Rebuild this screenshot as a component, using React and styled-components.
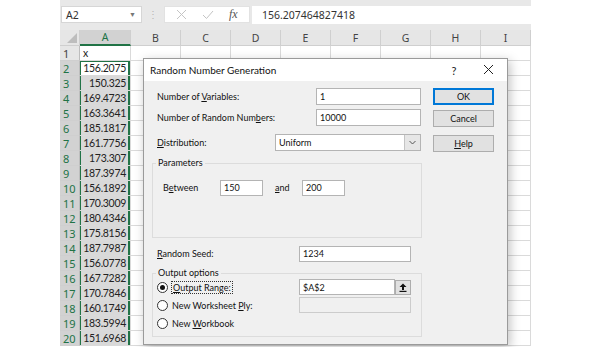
import React from 'react';
import styled, { createGlobalStyle } from 'styled-components';

const GlobalStyle = createGlobalStyle`
  html, body {
    margin: 0;
    padding: 0;
    background: #ffffff;
  }
  body {
    font-family: 'Noto Sans', 'Liberation Sans', sans-serif;
  }
`;

const COLS = ['A', 'B', 'C', 'D', 'E', 'F', 'G', 'H', 'I'];
const VALUES = [
  '156.2075', '150.325', '169.4723', '163.3641', '185.1817', '161.7756',
  '173.307', '187.3974', '156.1892', '170.3009', '180.4346', '175.8156',
  '187.7987', '156.0778', '167.7282', '170.7846', '160.1749', '183.5994',
  '151.6968',
];

const GREEN = '#217346';

const Frame = styled.div`
  position: relative;
  width: 471px;
  height: 347px;
  margin-left: 60px;
  overflow: hidden;
  background: #fff;
`;

const FormulaBar = styled.div`
  height: 30px;
  background: #e8e8e8;
  display: flex;
  align-items: flex-start;
  padding: 6px 0 0 1px;
  box-sizing: border-box;
`;

const NameBox = styled.div`
  width: 81px;
  height: 17px;
  background: #fff;
  border: 1px solid #d6d6d6;
  box-sizing: border-box;
  display: flex;
  align-items: center;
  justify-content: space-between;
  padding: 0 5px 0 4px;
  font-size: 10.5px;
  color: #333;
`;

const Caret = styled.span`
  font-size: 7px;
  color: #777;
`;

const Dots = styled.span`
  width: 22px;
  text-align: center;
  color: #b5b5b5;
  font-size: 10px;
  line-height: 17px;
`;

const FxIcons = styled.div`
  width: 86px;
  height: 17px;
  display: flex;
  align-items: center;
  justify-content: space-around;
  padding: 0 4px;
  box-sizing: border-box;
  background: #fff;
  border: 1px solid #e2e2e2;
  margin-right: 2px;
`;

const Fx = styled.span`
  font-family: 'Liberation Serif', serif;
  font-style: italic;
  font-size: 12px;
  color: #555;
`;

const FormulaInput = styled.div`
  flex: 1;
  height: 18px;
  background: #fff;
  display: flex;
  align-items: center;
  padding-left: 10px;
  font-size: 10.5px;
  color: #333;
`;

const Grid = styled.div`
  display: grid;
  grid-template-columns: 20px 51px repeat(8, 50px);
  grid-auto-rows: 15px;
  grid-template-rows: 16px;
`;

const ColHead = styled.div`
  background: ${(p) => (p.$active ? '#d2d2d2' : '#e6e6e6')};
  color: ${(p) => (p.$active ? GREEN : '#444')};
  border-right: 1px solid #cfcfcf;
  border-bottom: ${(p) => (p.$active ? `2px solid ${GREEN}` : '1px solid #cfcfcf')};
  box-sizing: border-box;
  font-size: 10.5px;
  display: flex;
  align-items: center;
  justify-content: center;
`;

const Corner = styled.div`
  background: #e6e6e6;
  border-right: 1px solid #cfcfcf;
  border-bottom: 1px solid #cfcfcf;
  box-sizing: border-box;
  position: relative;
  &::after {
    content: '';
    position: absolute;
    right: 2px;
    bottom: 2px;
    border-left: 10px solid transparent;
    border-bottom: 10px solid #bdbdbd;
  }
`;

const RowHead = styled.div`
  background: ${(p) => (p.$active ? '#d2d2d2' : '#e6e6e6')};
  color: ${(p) => (p.$active ? GREEN : '#444')};
  border-right: 1px solid #bdbdbd;
  border-bottom: 1px solid #cfcfcf;
  box-sizing: border-box;
  font-size: 11px;
  display: flex;
  align-items: center;
  padding-left: 3px;
`;

const Cell = styled.div`
  background: ${(p) => (p.$sel && !p.$current ? '#d9d9d9' : '#fff')};
  border-right: 1px solid #dadada;
  border-bottom: 1px solid #dadada;
  box-sizing: border-box;
  font-family: 'Lato', 'Liberation Sans', sans-serif;
  font-size: 10.5px;
  letter-spacing: -0.3px;
  color: #222;
  display: flex;
  align-items: center;
  justify-content: ${(p) => (p.$num ? 'flex-end' : 'flex-start')};
  padding: 0 4px 0 3px;
  box-shadow: ${(p) =>
    p.$sel
      ? `inset 1px 0 ${GREEN}, inset -2px 0 ${GREEN}${p.$current ? `, inset 0 1px ${GREEN}` : ''}`
      : 'none'};
`;

/* dialog */

const Dialog = styled.div`
  position: absolute;
  left: 83px;
  top: 58px;
  width: 365px;
  height: 287px;
  background: #f0f0f0;
  border: 1px solid #9a9a9a;
  box-sizing: border-box;
  box-shadow: 2px 3px 10px rgba(0, 0, 0, 0.25);
  font-family: 'Lato', 'Noto Sans', sans-serif;
  font-size: 9px;
  color: #111;
  display: flex;
  flex-direction: column;
`;

const TitleBar = styled.div`
  height: 22px;
  background: #fff;
  display: flex;
  align-items: center;
  padding: 0 8px 0 6px;
  font-size: 10px;
`;

const Title = styled.span`
  flex: 1;
`;

const TitleIcon = styled.span`
  width: 22px;
  text-align: center;
  margin-left: 12px;
  font-size: 11px;
  color: #222;
`;

const Body = styled.div`
  display: flex;
  padding: 7px 0 0 8px;
  gap: 11px;
`;

const Form = styled.div`
  width: 270px;
  display: flex;
  flex-direction: column;
`;

const Row = styled.div`
  display: flex;
  align-items: center;
  height: ${(p) => p.$h || 17}px;
  margin-top: ${(p) => p.$mt || 0}px;
  padding-left: ${(p) => p.$pl ?? 5}px;
`;

const Label = styled.span`
  width: ${(p) => p.$w || 'auto'};
  padding-left: ${(p) => p.$pl || 0}px;
  box-sizing: border-box;
  flex-shrink: 0;
`;

const Input = styled.div`
  width: ${(p) => p.$w}px;
  height: ${(p) => p.$h || 17}px;
  margin-left: ${(p) => (p.$auto ? 'auto' : '0')};
  margin-right: ${(p) => p.$mr || 0}px;
  background: ${(p) => (p.$disabled ? '#f0f0f0' : '#fff')};
  border: 1px solid ${(p) => (p.$disabled ? '#cccccc' : '#b4b4b4')};
  box-sizing: border-box;
  display: flex;
  align-items: center;
  padding-left: 3px;
  font-size: 9px;
`;

const Select = styled(Input)`
  padding-right: 0;
  justify-content: space-between;
`;

const SelectArrow = styled.div`
  width: 15px;
  height: 15px;
  background: #e6e6e6;
  border-left: 1px solid #c4c4c4;
  display: flex;
  align-items: center;
  justify-content: center;
`;

const Group = styled.fieldset`
  margin: ${(p) => p.$mt || 0}px 0 0 0;
  padding: 0 0 0 3px;
  border: 1px solid #dcdcdc;
  height: ${(p) => p.$h}px;
  box-sizing: border-box;
  min-width: 0;
`;

const Legend = styled.legend`
  padding: 0 2px;
  font-size: 9px;
  line-height: 12px;
`;

const Radio = styled.span`
  width: 9px;
  height: 9px;
  border-radius: 50%;
  border: 1px solid #333;
  background: #fff;
  margin-right: 4px;
  flex-shrink: 0;
  position: relative;
  &::after {
    content: '';
    display: ${(p) => (p.$checked ? 'block' : 'none')};
    position: absolute;
    inset: 2px;
    border-radius: 50%;
    background: #111;
  }
`;

const RadioLabel = styled.span`
  width: ${(p) => p.$w || 'auto'};
  flex-shrink: 0;
`;

const Focus = styled.span`
  outline: 1px dotted #333;
  outline-offset: 0;
  padding: 0 1px;
`;

const PickButton = styled.div`
  width: 16px;
  height: 15px;
  background: #e1e1e1;
  border: 1px solid #adadad;
  box-sizing: border-box;
  display: flex;
  align-items: center;
  justify-content: center;
`;

const Buttons = styled.div`
  display: flex;
  flex-direction: column;
`;

const Button = styled.div`
  width: 61px;
  height: 17px;
  margin-top: ${(p) => p.$mt || 0}px;
  background: #e1e1e1;
  border: 1px solid ${(p) => (p.$primary ? '#0078d7' : '#adadad')};
  box-shadow: ${(p) => (p.$primary ? 'inset 0 0 0 1px #0078d7' : 'none')};
  box-sizing: border-box;
  display: flex;
  align-items: center;
  justify-content: center;
  font-size: 9px;
`;

const CloseIcon = () => (
  <svg width="11" height="11" viewBox="0 0 11 11">
    <path d="M1 1 L10 10 M10 1 L1 10" stroke="#222" strokeWidth="1" fill="none" />
  </svg>
);

const CrossIcon = () => (
  <svg width="11" height="11" viewBox="0 0 11 11">
    <path d="M1 1 L10 10 M10 1 L1 10" stroke="#c4c4c4" strokeWidth="1" fill="none" />
  </svg>
);

const CheckIcon = () => (
  <svg width="12" height="10" viewBox="0 0 12 10">
    <path d="M1 5 L4.5 8.5 L11 1" stroke="#c4c4c4" strokeWidth="1" fill="none" />
  </svg>
);

const Chevron = () => (
  <svg width="7" height="5" viewBox="0 0 7 5">
    <path d="M0.5 1 L3.5 4 L6.5 1" stroke="#555" strokeWidth="1" fill="none" />
  </svg>
);

const UploadIcon = () => (
  <svg width="8" height="9" viewBox="0 0 8 9">
    <path d="M4 0.5 L7.5 4 L5 4 L5 7 L3 7 L3 4 L0.5 4 Z" fill="#111" />
    <rect x="0.5" y="7.8" width="7" height="1.2" fill="#111" />
  </svg>
);

const Spreadsheet = () => {
  const rows = [];
  for (let r = 1; r <= 20; r++) {
    const inSel = r >= 2;
    rows.push(
      <React.Fragment key={r}>
        <RowHead $active={inSel}>{r}</RowHead>
        {COLS.map((c) => {
          if (c === 'A') {
            const value = r === 1 ? 'x' : VALUES[r - 2];
            return (
              <Cell key={c} $num={r > 1} $sel={inSel} $current={r === 2}>
                {value}
              </Cell>
            );
          }
          return <Cell key={c} />;
        })}
      </React.Fragment>
    );
  }

  return (
    <Grid>
      <Corner />
      {COLS.map((c) => (
        <ColHead key={c} $active={c === 'A'}>
          {c}
        </ColHead>
      ))}
      {rows}
    </Grid>
  );
};

const RandomNumberDialog = () => (
  <Dialog>
    <TitleBar>
      <Title>Random Number Generation</Title>
      <TitleIcon>?</TitleIcon>
      <TitleIcon>
        <CloseIcon />
      </TitleIcon>
    </TitleBar>
    <Body>
      <Form>
        <Row>
          <Label>
            Number of <u>V</u>ariables:
          </Label>
          <Input $w={105} $auto $mr={1}>1</Input>
        </Row>
        <Row $mt={4}>
          <Label>
            Number of Random Num<u>b</u>ers:
          </Label>
          <Input $w={105} $auto $mr={1}>10000</Input>
        </Row>
        <Row $mt={8}>
          <Label>
            <u>D</u>istribution:
          </Label>
          <Select $w={146} $auto $mr={1}>
            Uniform
            <SelectArrow>
              <Chevron />
            </SelectArrow>
          </Select>
        </Row>
        <Group $mt={6} $h={81}>
          <Legend>Parameters</Legend>
          <Row $mt={10} $pl={7}>
            <Label $w="57px">
              B<u>e</u>tween
            </Label>
            <Input $w={43} $h={16}>150</Input>
            <Label $w="39px" $pl={12}>
              <u>a</u>nd
            </Label>
            <Input $w={43} $h={16}>200</Input>
          </Row>
        </Group>
        <Row $mt={7}>
          <Label $w="142px">
            <u>R</u>andom Seed:
          </Label>
          <Input $w={112} $h={16}>1234</Input>
        </Row>
        <Group $mt={5} $h={70}>
          <Legend>Output options</Legend>
          <Row $mt={0} $pl={1} $h={16}>
            <Radio $checked />
            <RadioLabel $w="127px">
              <Focus>
                <u>O</u>utput Range:
              </Focus>
            </RadioLabel>
            <Input $w={96} $h={16}>$A$2</Input>
            <PickButton>
              <UploadIcon />
            </PickButton>
          </Row>
          <Row $mt={2} $pl={1} $h={16}>
            <Radio />
            <RadioLabel $w="127px">
              New Worksheet <u>P</u>ly:
            </RadioLabel>
            <Input $w={112} $h={16} $disabled />
          </Row>
          <Row $mt={2} $pl={1} $h={16}>
            <Radio />
            <RadioLabel>
              New <u>W</u>orkbook
            </RadioLabel>
          </Row>
        </Group>
      </Form>
      <Buttons>
        <Button $primary>OK</Button>
        <Button $mt={5}>Cancel</Button>
        <Button $mt={8}>
          <span>
            <u>H</u>elp
          </span>
        </Button>
      </Buttons>
    </Body>
  </Dialog>
);

const App = () => (
  <>
    <GlobalStyle />
    <Frame>
      <FormulaBar>
        <NameBox>
          A2
          <Caret>▼</Caret>
        </NameBox>
        <Dots>⋮</Dots>
        <FxIcons>
          <CrossIcon />
          <CheckIcon />
          <Fx>fx</Fx>
        </FxIcons>
        <FormulaInput>156.207464827418</FormulaInput>
      </FormulaBar>
      <Spreadsheet />
      <RandomNumberDialog />
    </Frame>
  </>
);

export default App;
